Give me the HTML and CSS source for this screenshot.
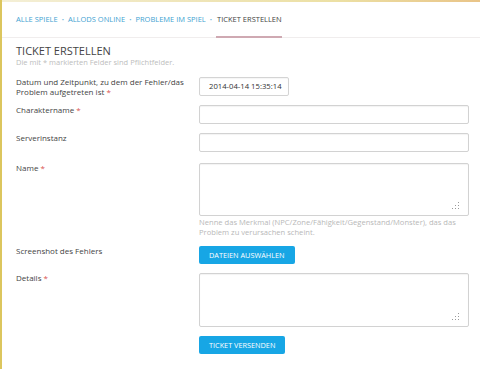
FILE: index.html
```html
<!DOCTYPE html>
<html lang="de">
<head>
<meta charset="utf-8">
<title>Ticket erstellen</title>
<link rel="stylesheet" href="styles.css">
</head>
<body>
<div class="topstrip"></div>
<nav class="crumbs">
  <a class="crumb" href="#">Alle Spiele</a><span class="dot">•</span>
  <a class="crumb" href="#">Allods Online</a><span class="dot">•</span>
  <a class="crumb" href="#">Probleme im Spiel</a><span class="dot">•</span>
  <span class="crumb current">Ticket erstellen</span>
</nav>
<main class="content">
  <h1 class="title">Ticket erstellen</h1>
  <p class="subtitle">Die mit * markierten Felder sind Pflichtfelder.</p>
  <form class="form">
    <label class="label">Datum und Zeitpunkt, zu dem der Fehler/das Problem aufgetreten ist <span class="req">*</span></label>
    <div class="field"><div class="date">2014-04-14 15:35:14</div></div>

    <label class="label">Charaktername <span class="req">*</span></label>
    <div class="field"><input class="input" type="text"></div>

    <label class="label">Serverinstanz</label>
    <div class="field"><input class="input" type="text"></div>

    <label class="label spaced">Name <span class="req">*</span></label>
    <div class="field spaced">
      <div class="areawrap">
        <textarea class="area"></textarea>
        <svg class="grip" width="8" height="8" viewBox="0 0 8 8"><g fill="#9a9a9a"><rect x="6" y="0" width="1" height="1"/><rect x="3" y="3" width="1" height="1"/><rect x="6" y="3" width="1" height="1"/><rect x="0" y="6" width="1" height="1"/><rect x="3" y="6" width="1" height="1"/><rect x="6" y="6" width="1" height="1"/></g></svg>
      </div>
      <p class="hint">Nenne das Merkmal (NPC/Zone/Fähigkeit/Gegenstand/Monster), das das Problem zu verursachen scheint.</p>
    </div>

    <label class="label">Screenshot des Fehlers</label>
    <div class="field"><button type="button" class="btn">DATEIEN AUSWäHLEN</button></div>

    <label class="label">Details <span class="req">*</span></label>
    <div class="field">
      <div class="areawrap tall">
        <textarea class="area"></textarea>
        <svg class="grip" width="8" height="8" viewBox="0 0 8 8"><g fill="#9a9a9a"><rect x="6" y="0" width="1" height="1"/><rect x="3" y="3" width="1" height="1"/><rect x="6" y="3" width="1" height="1"/><rect x="0" y="6" width="1" height="1"/><rect x="3" y="6" width="1" height="1"/><rect x="6" y="6" width="1" height="1"/></g></svg>
      </div>
    </div>

    <span class="label"></span>
    <div class="field"><button type="submit" class="btn">Ticket versenden</button></div>
  </form>
</main>
</body>
</html>
```
FILE: styles.css
```css
* { box-sizing: border-box; }
html, body { margin: 0; padding: 0; background: #fff; }
body {
  font-family: "Open Sans", "Liberation Sans", sans-serif;
  color: #333;
  border-left: 2px solid #dcc65e;
  min-height: 369px;
}
.topstrip {
  height: 2px;
  background: linear-gradient(90deg, #f4efd6 0%, #efe5b8 40%, #ece0a4 70%, #e9c488 100%);
}
.crumbs {
  display: flex;
  align-items: flex-end;
  height: 36px;
  padding-left: 14px;
  border-bottom: 1px solid #f0eded;
  font-size: 7.5px;
  text-transform: uppercase;
}
.crumb {
  color: #3fa3d2;
  text-decoration: none;
  padding-bottom: 13px;
}
.dot {
  color: #6ab4d8;
  padding: 0 4px 13px 4px;
  font-size: 6px;
}
.current {
  color: #444;
  padding: 0 0 12px 1px;
  border-bottom: 2px solid #cfa9b2;
  margin-bottom: -1px;
  width: 66px;
}
.content {
  padding: 0 11px 0 14px;
}
.title {
  margin: 7px 0 0;
  font-size: 11px;
  line-height: 12px;
  font-weight: 400;
  text-transform: uppercase;
  color: #444;
}
.subtitle {
  margin: 1px 0 0;
  font-size: 7.5px;
  line-height: 9px;
  color: #bdbdbd;
}
.form {
  display: grid;
  grid-template-columns: 183px 270px;
  row-gap: 9px;
  margin-top: 10px;
}
.label {
  font-size: 8px;
  line-height: 9.5px;
  color: #444;
  padding-top: 0;
}
.spaced { margin-top: 2px; }
.req { color: #d9534f; }
.field { display: flex; flex-direction: column; align-items: flex-start; }
.date {
  width: 90px;
  height: 19px;
  border: 1px solid #d4d4d4;
  border-radius: 2px;
  font-size: 7.7px;
  line-height: 17px;
  padding-left: 9px;
  color: #333;
  box-shadow: inset 0 1px 1px rgba(0,0,0,0.04);
}
.input {
  width: 270px;
  height: 19px;
  border: 1px solid #d2d2d2;
  border-radius: 2px;
  margin: 0;
  padding: 0 4px;
  background: #fff;
  box-shadow: inset 0 1px 1px rgba(0,0,0,0.05);
  outline: none;
}
.areawrap { position: relative; width: 270px; height: 53px; }
.areawrap.tall { height: 54px; }
.area {
  display: block;
  width: 100%;
  height: 100%;
  border: 1px solid #d2d2d2;
  border-radius: 2px;
  margin: 0;
  padding: 3px;
  resize: none;
  box-shadow: inset 0 1px 1px rgba(0,0,0,0.05);
  outline: none;
}
.grip { position: absolute; right: 9px; bottom: 6px; }
.hint {
  margin: 2px 0 0;
  font-size: 7.6px;
  line-height: 9.5px;
  color: #b8b8b8;
}
.btn {
  height: 18px;
  border: 0;
  border-radius: 2px;
  background: #17a6e5;
  color: #fff;
  font-family: inherit;
  font-size: 7.3px;
  text-transform: uppercase;
  padding: 0 10px;
  margin: 0;
  cursor: pointer;
}
```
